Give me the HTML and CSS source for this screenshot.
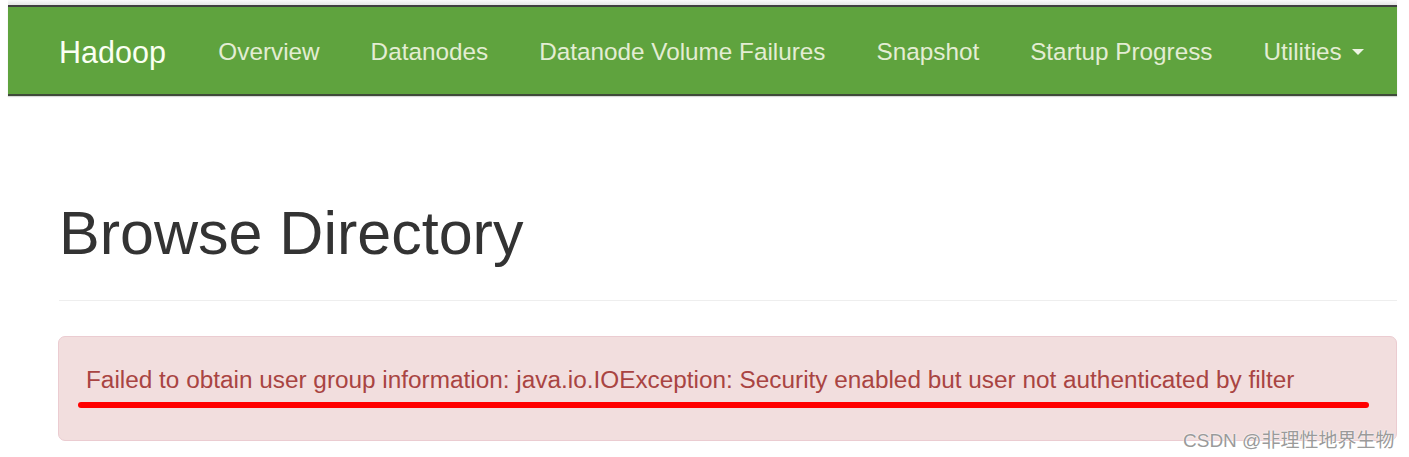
FILE: index.html
```html
<!DOCTYPE html>
<html>
<head>
<meta charset="utf-8">
<link rel="stylesheet" href="styles.css">
</head>
<body>
<div class="page">
  <div class="topstrip"></div>
  <nav class="navbar">
    <a class="brand">Hadoop</a>
    <ul class="nav">
      <li><a>Overview</a></li>
      <li><a>Datanodes</a></li>
      <li><a>Datanode Volume Failures</a></li>
      <li><a>Snapshot</a></li>
      <li><a>Startup Progress</a></li>
      <li><a>Utilities <span class="caret"></span></a></li>
    </ul>
  </nav>
  <main class="container">
    <h1 class="title">Browse Directory</h1>
    <hr class="rule">
    <div class="alert">
      <p class="alert-text">Failed to obtain user group information: java.io.IOException: Security enabled but user not authenticated by filter</p>
      <div class="mark"></div>
    </div>
  </main>
</div>
<div class="watermark">CSDN @非理性地界生物</div>
</body>
</html>
```

FILE: styles.css
```css
html, body {
  margin: 0;
  padding: 0;
  background: #fff;
  font-family: "Liberation Sans", Arial, sans-serif;
}
body {
  position: relative;
  width: 1409px;
  height: 457px;
  overflow: hidden;
}
.page {
  margin-left: 8px;
  width: 1389px;
}
.topstrip {
  height: 5px;
  background: linear-gradient(#fbfbfb, #e6e6e6);
}
.navbar {
  display: flex;
  align-items: center;
  height: 87px;
  padding-top: 3px;
  box-sizing: content-box;
  height: 84px;
  background: #5fa33e;
  border-top: 2px solid #404040;
  border-bottom: 2px solid #3f4a3a;
  box-shadow: 0 1px 1px rgba(0,0,0,0.15);
}
.brand {
  padding-left: 51px;
  padding-right: 27px;
  font-size: 30.5px;
  color: #fafff2;
}
.nav {
  display: flex;
  list-style: none;
  margin: 0;
  padding: 0;
}
.nav a {
  display: flex;
  align-items: center;
  padding: 0 25.5px;
  font-size: 24.3px;
  color: #e3edd3;
}
.caret {
  display: inline-block;
  width: 0;
  height: 0;
  margin-left: 10px;
  border-left: 6px solid transparent;
  border-right: 6px solid transparent;
  border-top: 6px solid #eef4e4;
}
.container {
  padding-left: 50px;
}
.title {
  margin: 104px 0 0 1px;
  font-size: 61px;
  line-height: 67px;
  font-weight: 400;
  color: #333;
}
.rule {
  margin: 33px 0 0 1px;
  border: 0;
  border-top: 1px solid #eeeeee;
  height: 0;
}
.alert {
  position: relative;
  margin-top: 35px;
  padding: 26px 26px 26px 27px;
  background: #f2dede;
  border: 1px solid #ebccd1;
  border-radius: 7px;
}
.alert-text {
  margin: 0 0 17px;
  font-size: 24.35px;
  line-height: 34px;
  color: #a94442;
}
.mark {
  position: absolute;
  left: 19px;
  top: 65px;
  width: 1291px;
  height: 6px;
  border-radius: 3px;
  background: #ff0000;
}
.watermark {
  position: absolute;
  left: 1183px;
  top: 425px;
  font-family: "Liberation Sans", "Noto Sans CJK SC", sans-serif;
  font-size: 19px;
  color: #9a9a9a;
  text-shadow: 0 0 2px #fff, 0 0 1px #fff;
  white-space: nowrap;
}
```
